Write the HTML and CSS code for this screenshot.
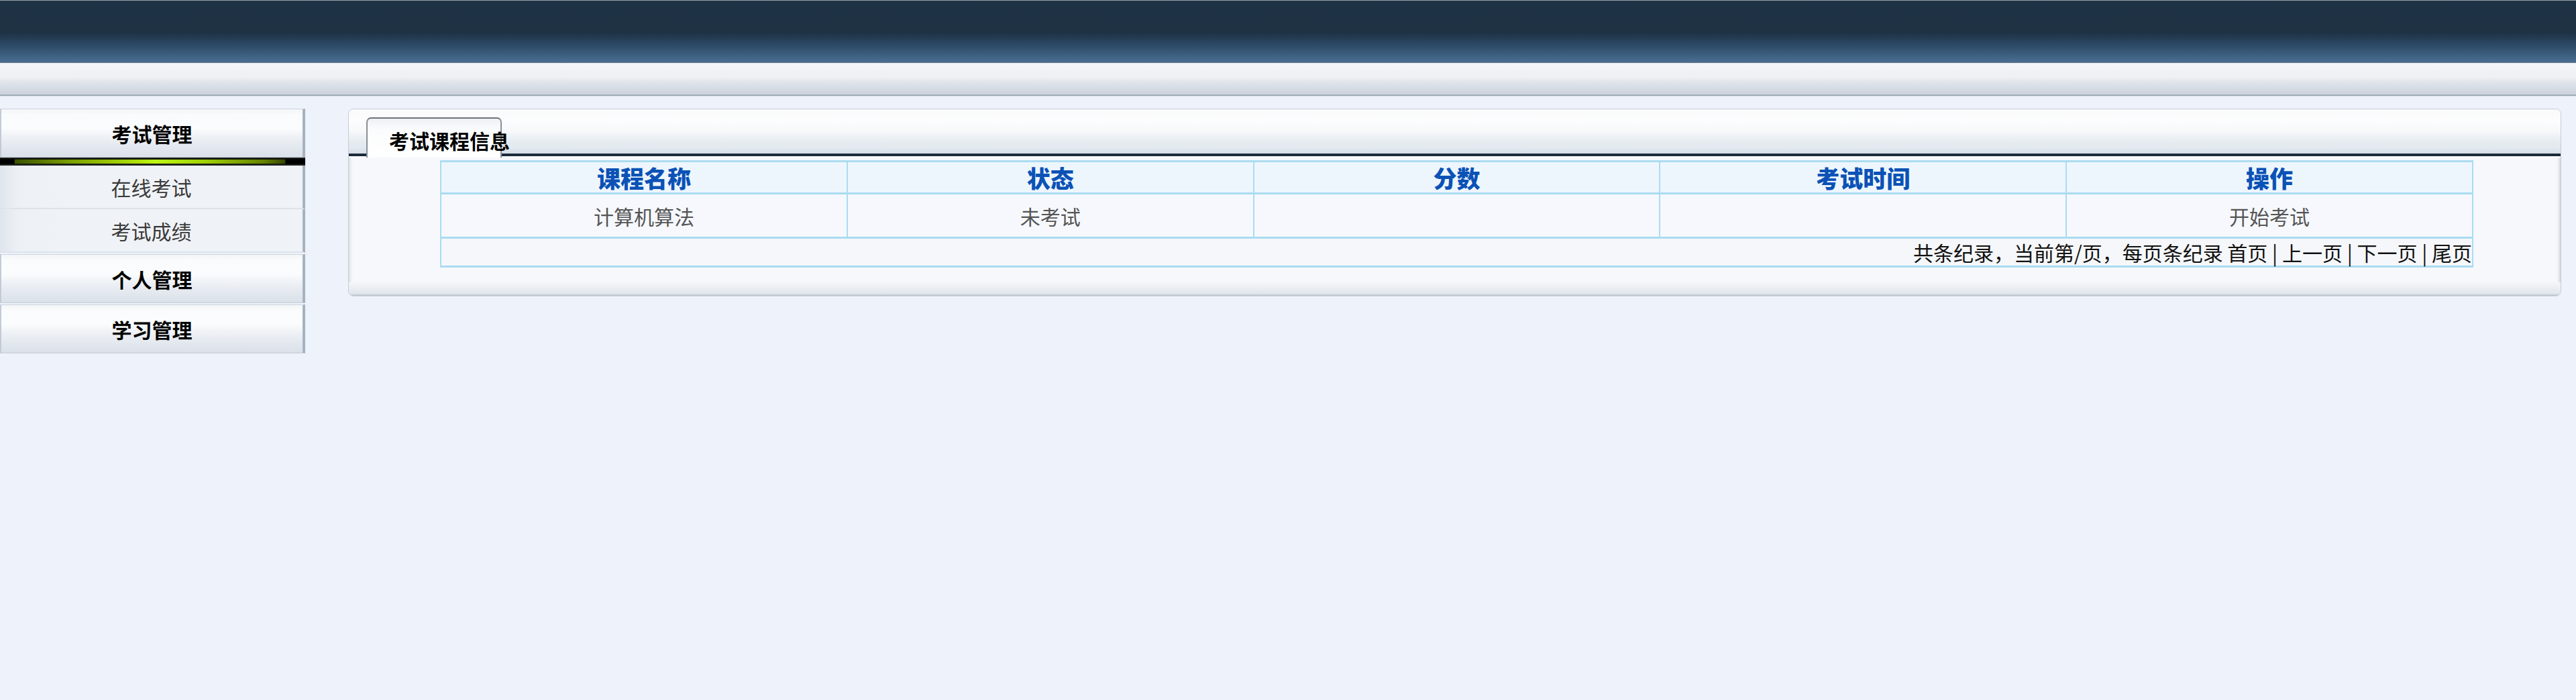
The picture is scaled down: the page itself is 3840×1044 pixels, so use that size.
FILE: index.html
```html
<!DOCTYPE html>
<html lang="zh-CN">
<head>
<meta charset="utf-8">
<title>考试课程信息</title>
<link rel="stylesheet" href="styles.css">
</head>
<body>
<div class="topbar"></div>
<div class="subbar"></div>
<div class="main">
  <div class="sidebar">
    <div class="menu-head">考试管理</div>
    <div class="menu-glow"><span class="glow-line"></span></div>
    <div class="menu-item">在线考试</div>
    <div class="menu-item">考试成绩</div>
    <div class="menu-head sep">个人管理</div>
    <div class="menu-head sep">学习管理</div>
  </div>
  <div class="panel">
    <div class="panel-head">
      <div class="tab"><span class="tab-text">考试课程信息</span></div>
    </div>
    <div class="panel-body">
      <table class="grid">
        <thead>
          <tr><th>课程名称</th><th>状态</th><th>分数</th><th>考试时间</th><th>操作</th></tr>
        </thead>
        <tbody>
          <tr class="data"><td>计算机算法</td><td>未考试</td><td></td><td></td><td>开始考试</td></tr>
          <tr class="foot"><td colspan="5">共条纪录，当前第/页，每页条纪录 首页 | 上一页 | 下一页 | 尾页</td></tr>
        </tbody>
      </table>
    </div>
    <div class="panel-foot"></div>
  </div>
</div>
</body>
</html>
```
FILE: styles.css
```css
html, body {
  margin: 0;
  padding: 0;
}
body {
  background: #eef2fa;
  font-family: "Noto Sans CJK SC", "Noto Sans", sans-serif;
  font-size: 30px;
  color: #222;
}
.topbar {
  height: 92px;
  border-top: 1px solid #9aa3ab;
  background: linear-gradient(to bottom, #1e3245 0%, #1e3244 52%, #2c4a66 72%, #46698c 96%, #4a6d90 100%);
  border-bottom: 1px solid #6c7e91;
}
.subbar {
  height: 47px;
  background: linear-gradient(to bottom, #f4f5f7 0%, #eef0f3 45%, #dfe4ea 62%, #d0d7e0 90%, #cdd4dd 100%);
  border-bottom: 2px solid #9eabb9;
  box-shadow: 0 1px 0 #dfe5ee;
}
.main {
  display: flex;
  align-items: flex-start;
  padding-top: 19px;
}
.sidebar {
  width: 455px;
  flex: none;
}
.menu-head {
  height: 73px;
  box-sizing: border-box;
  display: flex;
  align-items: center;
  justify-content: center;
  font-weight: bold;
  color: #000;
  line-height: 30px;
  background: linear-gradient(to bottom, #f3f5f8 0%, #fafbfc 12%, #fbfcfd 40%, #eef1f5 58%, #e3e8ef 80%, #dbe1e9 100%);
  border-top: 1px solid #cdd4de;
  border-left: 2px solid #c2cad6;
  border-right: 4px solid #a6b2c1;
  border-bottom: 1px solid #c3cbd6;
}
.menu-head.sep {
  margin-top: 2px;
}
.menu-glow {
  height: 12px;
  background: linear-gradient(to bottom, #2a2d2a 0%, #000 25%, #000 75%, #3a3e3a 100%);
  display: flex;
  align-items: center;
  padding: 0 30px 0 22px;
}
.glow-line {
  display: block;
  flex: 1;
  height: 6px;
  background: linear-gradient(to right, #3a5200 0%, #7a9e00 20%, #acdf0a 45%, #bef514 52%, #a0d208 70%, #668400 92%, #334600 100%);
  box-shadow: 0 0 2px #3a5000;
}
.menu-item {
  height: 65px;
  box-sizing: border-box;
  display: flex;
  align-items: center;
  justify-content: center;
  color: #3a3a3a;
  line-height: 30px;
  background: linear-gradient(to right, #dfe5ed 0%, #edf1f5 6%, #eff2f6 20%, #eff2f6 100%);
  border-right: 4px solid #a6b2c1;
  border-bottom: 2px solid #dde3ea;
}
.panel {
  flex: 1;
  margin-left: 64px;
  margin-right: 22px;
  border: 1px solid #c6cdd6;
  border-radius: 8px;
  background: #f6f8fb;
  overflow: hidden;
  box-shadow: inset -5px 0 4px -3px #c9d0da, inset 5px 0 4px -3px #d6dce4;
}
.panel-head {
  height: 66px;
  background: linear-gradient(to bottom, #f9fafb 0%, #fdfdfe 25%, #f6f8fa 50%, #e8edf2 70%, #e2e8ef 88%, #d4dce5 100%);
  border-bottom: 4px solid #1c2b3a;
  display: flex;
  align-items: flex-end;
  padding-left: 26px;
}
.tab {
  width: 202px;
  height: 60px;
  margin-bottom: -6px;
  position: relative;
  border: 2px solid #8a8f95;
  border-bottom: none;
  border-top-color: #6e7378;
  border-radius: 7px 7px 0 0;
  background: linear-gradient(to bottom, #eef1f4 0%, #fbfcfd 30%, #ffffff 100%);
  display: flex;
  align-items: center;
  padding-left: 32px;
  box-sizing: border-box;
}
.tab-text {
  white-space: nowrap;
  font-weight: bold;
  color: #000;
  line-height: 30px;
  margin-top: 6px;
}
.panel-body {
  border-top: 2px solid #ffffff;
  padding: 4px 130px 22px 136px;
}
.panel-foot {
  height: 20px;
  background: linear-gradient(to bottom, #f4f6f8 0%, #eceff3 40%, #e1e6ec 85%, #b8c1cb 100%);
}
.grid {
  width: 100%;
  border-collapse: collapse;
  table-layout: fixed;
}
.grid th, .grid td {
  border-left: 2px solid #aadcf0;
  border-right: 2px solid #aadcf0;
  border-top: 3px solid #aadcf0;
  border-bottom: 3px solid #aadcf0;
  padding: 0;
  text-align: center;
  line-height: 30px;
}
.grid th {
  height: 45px;
  background: #eef6fd;
  color: #0b52b6;
  font-size: 35px;
  font-weight: 900;
  line-height: 35px;
}
.grid .data td {
  height: 63px;
  background: #f6f8fd;
  color: #555;
}
.grid .foot td {
  height: 40px;
  background: #f5f7fa;
  text-align: right;
  color: #111;
  white-space: nowrap;
}
```
